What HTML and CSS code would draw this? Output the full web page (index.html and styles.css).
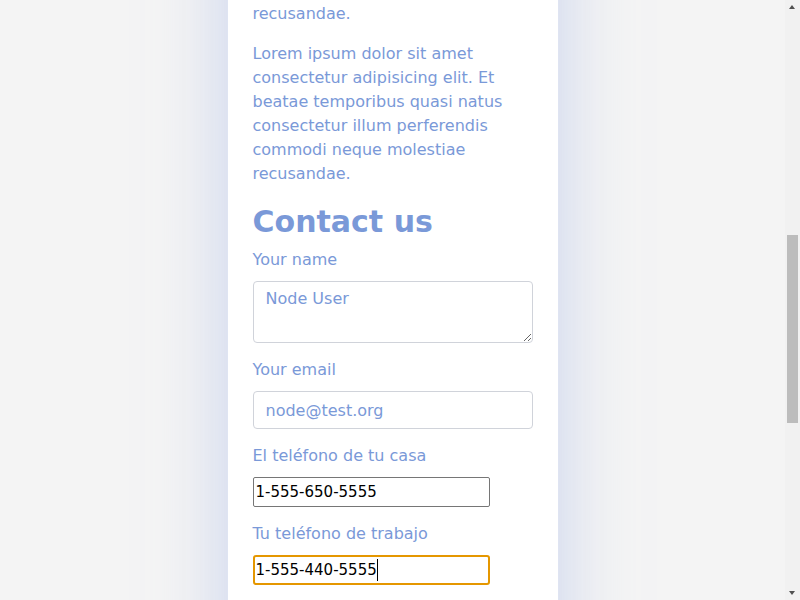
FILE: index.html
```html
<!DOCTYPE html>
<html lang="en">
<head>
<meta charset="utf-8">
<title>Contact us</title>
<link rel="stylesheet" href="styles.css">
</head>
<body>
<main class="panel">
  <h1 class="title">About us</h1>
  <p class="text">Lorem ipsum dolor sit amet consectetur adipisicing elit. Et beatae temporibus quasi natus consectetur illum perferendis commodi neque molestiae recusandae.</p>
  <p class="text">Lorem ipsum dolor sit amet consectetur adipisicing elit. Et beatae temporibus quasi natus consectetur illum perferendis commodi neque molestiae recusandae.</p>
  <p class="text">Lorem ipsum dolor sit amet consectetur adipisicing elit. Et beatae temporibus quasi natus consectetur illum perferendis commodi neque molestiae recusandae.</p>
  <p class="text">Lorem ipsum dolor sit amet consectetur adipisicing elit. Et beatae temporibus quasi natus consectetur illum perferendis commodi neque molestiae recusandae.</p>
  <p class="text" id="anchor">Lorem ipsum dolor sit amet consectetur adipisicing elit. Et beatae temporibus quasi natus consectetur illum perferendis commodi neque molestiae recusandae.</p>
  <h2 class="heading">Contact us</h2>
  <form class="form">
    <div class="field">
      <label class="label" for="name">Your name</label>
      <textarea class="area" id="name" placeholder="Node User"></textarea>
    </div>
    <div class="field">
      <label class="label" for="email">Your email</label>
      <input class="box" id="email" type="email" placeholder="node@test.org">
    </div>
    <div class="field">
      <label class="label" for="home">El teléfono de tu casa</label>
      <input class="plain" id="home" type="tel" value="1-555-650-5555">
    </div>
    <div class="field">
      <label class="label" for="work">Tu teléfono de trabajo</label>
      <span class="caret-wrap">
        <input class="plain active" id="work" type="tel" value="1-555-440-5555">
        <span class="caret"></span>
      </span>
    </div>
    <div class="field">
      <label class="label" for="msg">Your message</label>
      <textarea class="area tall" id="msg" placeholder="Hello"></textarea>
    </div>
    <button class="send" type="button">Send</button>
  </form>
  <p class="text">Lorem ipsum dolor sit amet consectetur adipisicing elit. Et beatae temporibus quasi natus consectetur illum perferendis commodi neque molestiae recusandae.</p>
</main>
<div class="scrollbar" aria-hidden="true">
  <span class="arrow up"></span>
  <span class="track"><span class="thumb"></span></span>
  <span class="arrow down"></span>
</div>
<script src="script.js"></script>
</body>
</html>
```

FILE: styles.css
```css
html, body {
  margin: 0;
  padding: 0;
}

body {
  background: #f4f4f4;
  font-family: "DejaVu Sans", sans-serif;
  font-size: 16px;
  line-height: 24px;
  color: #7a99d8;
  padding-right: 15px;
}

.panel {
  width: 280px;
  margin: 0 auto;
  padding: 24px 25px 119px;
  background: #ffffff;
  box-shadow: 0 0 60px 10px rgba(180, 195, 235, 0.55);
}

.title {
  margin: 0 0 32px;
  font-size: 40px;
  line-height: 48px;
  font-weight: bold;
}

.text {
  margin: 16px 0;
}

.heading {
  margin: 18px 0 8px;
  font-size: 30px;
  line-height: 36px;
  font-weight: bold;
  color: #7a99d8;
}

.form {
  display: flex;
  flex-direction: column;
  gap: 15px;
}

.field {
  display: flex;
  flex-direction: column;
  align-items: flex-start;
  gap: 9px;
}

.label {
  display: block;
  line-height: 24px;
}

.area {
  display: block;
  box-sizing: border-box;
  width: 280px;
  height: 62px;
  margin: 0;
  padding: 7px 12px;
  border: 1px solid #d0d3da;
  border-radius: 4px;
  font-family: inherit;
  font-size: 16px;
  line-height: 20px;
  color: #333;
  background: #fff;
}

.area.tall {
  height: 150px;
}

.box {
  display: block;
  box-sizing: border-box;
  width: 280px;
  height: 38px;
  margin: 0;
  padding: 0 12px;
  border: 1px solid #d0d3da;
  border-radius: 4px;
  font-family: inherit;
  font-size: 16px;
  color: #333;
  background: #fff;
}

.area::placeholder,
.box::placeholder {
  color: #7a99d8;
  opacity: 1;
}

.plain {
  display: block;
  box-sizing: border-box;
  width: 237px;
  height: 30px;
  margin: 0;
  padding: 1px 2px;
  border: 1px solid #767676;
  border-radius: 2px;
  font-family: inherit;
  font-size: 15px;
  color: #000;
  background: #fff;
}

.plain:focus {
  outline: none;
}

.plain.active {
  border: 2px solid #e59700;
  border-radius: 3px;
  padding: 0 1px;
  caret-color: transparent;
}

.caret-wrap {
  position: relative;
  display: block;
}

.caret {
  position: absolute;
  left: 124px;
  top: 4px;
  width: 1px;
  height: 22px;
  background: #000;
}

.send {
  box-sizing: border-box;
  height: 40px;
  width: 120px;
  border: none;
  border-radius: 4px;
  background: #7a99d8;
  color: #fff;
  font-family: inherit;
  font-size: 16px;
}

.scrollbar {
  position: fixed;
  top: 0;
  right: 0;
  width: 15px;
  height: 100vh;
  background: #f1f1f1;
  display: flex;
  flex-direction: column;
}

.arrow {
  position: relative;
  height: 15px;
  flex: none;
}

.arrow::before {
  content: "";
  position: absolute;
  left: 4px;
  width: 0;
  height: 0;
  border-left: 3.5px solid transparent;
  border-right: 3.5px solid transparent;
}

.arrow.up::before {
  top: 5px;
  border-bottom: 4px solid #505050;
}

.arrow.down::before {
  top: 6px;
  border-top: 4px solid #505050;
}

.track {
  flex: 1;
  display: block;
  padding-top: 220px;
}

.thumb {
  display: block;
  margin: 0 2px;
  height: 188px;
  background: #bcbcbc;
}
```

FILE: script.js
```js
(function () {
  var anchor = document.getElementById('anchor');
  var top = anchor.getBoundingClientRect().top + window.scrollY - 42;
  window.scrollTo(0, top);
})();
```
